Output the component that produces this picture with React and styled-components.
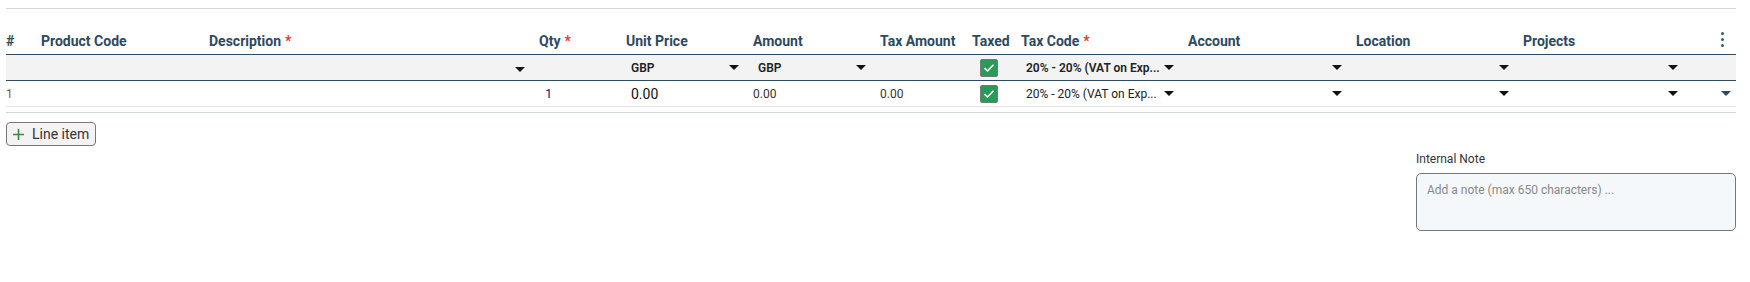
import React from 'react';
import styled, { createGlobalStyle } from 'styled-components';

const GlobalStyle = createGlobalStyle`
  body {
    margin: 0;
    background: #fff;
    font-family: Roboto, "Liberation Sans", Arial, sans-serif;
    color: #333;
  }
`;

const COLUMNS = '35px 168px 330px 87px 127px 127px 92px 49px 167px 168px 167px 169px 44px';

const Page = styled.div`
  padding: 8px 14px 0 6px;
  display: flex;
  flex-direction: column;
`;

const Table = styled.div`
  border-top: 1px solid #cfd8dc;
`;

const Row = styled.div`
  display: grid;
  grid-template-columns: ${COLUMNS};
  align-items: center;
`;

const HeaderRow = styled(Row)`
  height: 46px;
  align-items: end;
  padding-bottom: 5px;
  box-sizing: border-box;
  border-bottom: 1px solid #2b4b65;
`;

const FilterRow = styled(Row)`
  height: 25px;
  background: #f3f3f3;
  border-bottom: 1px solid #2b4b65;
`;

const DataRow = styled(Row)`
  height: 25px;
  border-bottom: 1px solid #e2e2e2;
`;

const HeadCell = styled.div`
  font-size: 14px;
  line-height: 16px;
  font-weight: 700;
  color: #2c4a62;
  white-space: nowrap;
  display: flex;
  justify-content: ${(p) => (p.$end ? 'flex-end' : 'flex-start')};
  padding-right: ${(p) => (p.$end ? '12px' : '0')};
`;

const Required = styled.span`
  color: #e53935;
  margin-left: 4px;
`;

const Cell = styled.div`
  display: flex;
  align-items: center;
  height: 100%;
  padding-left: ${(p) => p.$pl || 0}px;
  font-size: ${(p) => p.$size || 12}px;
  font-weight: ${(p) => (p.$bold ? 600 : 400)};
  color: ${(p) => p.$color || '#222'};
  white-space: nowrap;
  overflow: hidden;
`;

const Select = styled.div`
  display: flex;
  align-items: center;
  justify-content: space-between;
  height: 100%;
  padding: 0 14px 0 5px;
  font-size: 12px;
  font-weight: ${(p) => (p.$bold ? 600 : 400)};
  color: #222;
  white-space: nowrap;
`;

const Caret = styled.span`
  width: 0;
  height: 0;
  border-left: 5px solid transparent;
  border-right: 5px solid transparent;
  border-top: 5px solid ${(p) => p.$color || '#111'};
  margin-top: ${(p) => p.$drop || 0}px;
  flex-shrink: 0;
`;

const Check = styled.span`
  width: 18px;
  height: 18px;
  margin-left: 8px;
  box-sizing: border-box;
  border: 1px solid #6f7d74;
  border-radius: 2px;
  background: #2a9a5b;
  display: flex;
  align-items: center;
  justify-content: center;
`;

const Kebab = styled.div`
  display: flex;
  flex-direction: column;
  gap: 3px;
  margin-bottom: 2px;
  span {
    width: 3px;
    height: 3px;
    border-radius: 50%;
    background: #2f5b7c;
  }
`;

const RowToggle = styled.div`
  display: flex;
  justify-content: flex-end;
  padding-right: 5px;
`;

const Divider = styled.div`
  margin-top: 5px;
  border-top: 1px solid #ccd6dd;
`;

const AddButton = styled.button`
  align-self: flex-start;
  margin-top: 9px;
  height: 24px;
  width: 90px;
  padding: 0 0 0 6px;
  display: flex;
  align-items: center;
  gap: 8px;
  background: #f3f3f3;
  border: 1px solid #777;
  border-radius: 4px;
  font-family: inherit;
  font-size: 14px;
  color: #333;
`;

const NoteSection = styled.div`
  align-self: flex-end;
  width: 320px;
  margin-top: 6px;
  display: flex;
  flex-direction: column;
  gap: 7px;
`;

const NoteLabel = styled.label`
  font-size: 12px;
  line-height: 14px;
  color: #333;
`;

const NoteArea = styled.textarea`
  height: 58px;
  box-sizing: border-box;
  resize: none;
  padding: 9px 10px;
  background: #f5f8fb;
  border: 1px solid #777;
  border-radius: 5px;
  font-family: inherit;
  font-size: 12px;
  &::placeholder {
    color: #888;
  }
`;

const CheckBox = () => (
  <Check>
    <svg width="12" height="10" viewBox="0 0 12 10">
      <path d="M1.5 5.2 L4.5 8 L10.5 1.8" fill="none" stroke="#fff" strokeWidth="1.6" />
    </svg>
  </Check>
);

const headers = [
  { label: '#' },
  { label: 'Product Code' },
  { label: 'Description', required: true },
  { label: 'Qty', required: true },
  { label: 'Unit Price' },
  { label: 'Amount' },
  { label: 'Tax Amount' },
  { label: 'Taxed' },
  { label: 'Tax Code', required: true },
  { label: 'Account' },
  { label: 'Location' },
  { label: 'Projects' },
];

const TAX_CODE = '20% - 20% (VAT on Exp...';

export default function App() {
  return (
    <>
      <GlobalStyle />
      <Page>
        <Table>
          <HeaderRow>
            {headers.map((h) => (
              <HeadCell key={h.label}>
                {h.label}
                {h.required && <Required>*</Required>}
              </HeadCell>
            ))}
            <HeadCell $end>
              <Kebab>
                <span />
                <span />
                <span />
              </Kebab>
            </HeadCell>
          </HeaderRow>

          <FilterRow>
            <Cell />
            <Cell />
            <Select>
              <span />
              <Caret $drop={4} />
            </Select>
            <Cell />
            <Select $bold>
              GBP
              <Caret />
            </Select>
            <Select $bold>
              GBP
              <Caret />
            </Select>
            <Cell />
            <Cell>
              <CheckBox />
            </Cell>
            <Select $bold>
              {TAX_CODE}
              <Caret />
            </Select>
            <Select>
              <span />
              <Caret />
            </Select>
            <Select>
              <span />
              <Caret />
            </Select>
            <Select>
              <span />
              <Caret />
            </Select>
            <Cell />
          </FilterRow>

          <DataRow>
            <Cell $color="#8a5a2b">1</Cell>
            <Cell />
            <Cell />
            <Cell $pl={6} $size={13} $color="#1c2454">1</Cell>
            <Cell $pl={5} $size={14} $color="#111">0.00</Cell>
            <Cell $color="#333">0.00</Cell>
            <Cell $color="#333">0.00</Cell>
            <Cell>
              <CheckBox />
            </Cell>
            <Select>
              {TAX_CODE}
              <Caret />
            </Select>
            <Select>
              <span />
              <Caret />
            </Select>
            <Select>
              <span />
              <Caret />
            </Select>
            <Select>
              <span />
              <Caret />
            </Select>
            <RowToggle>
              <Caret $color="#2b4b65" />
            </RowToggle>
          </DataRow>
        </Table>

        <Divider />

        <AddButton type="button">
          <svg width="11" height="11" viewBox="0 0 11 11">
            <path d="M5.5 0 V11 M0 5.5 H11" stroke="#3a8a3a" strokeWidth="1.6" />
          </svg>
          Line item
        </AddButton>

        <NoteSection>
          <NoteLabel>Internal Note</NoteLabel>
          <NoteArea placeholder="Add a note (max 650 characters) ..." />
        </NoteSection>
      </Page>
    </>
  );
}
